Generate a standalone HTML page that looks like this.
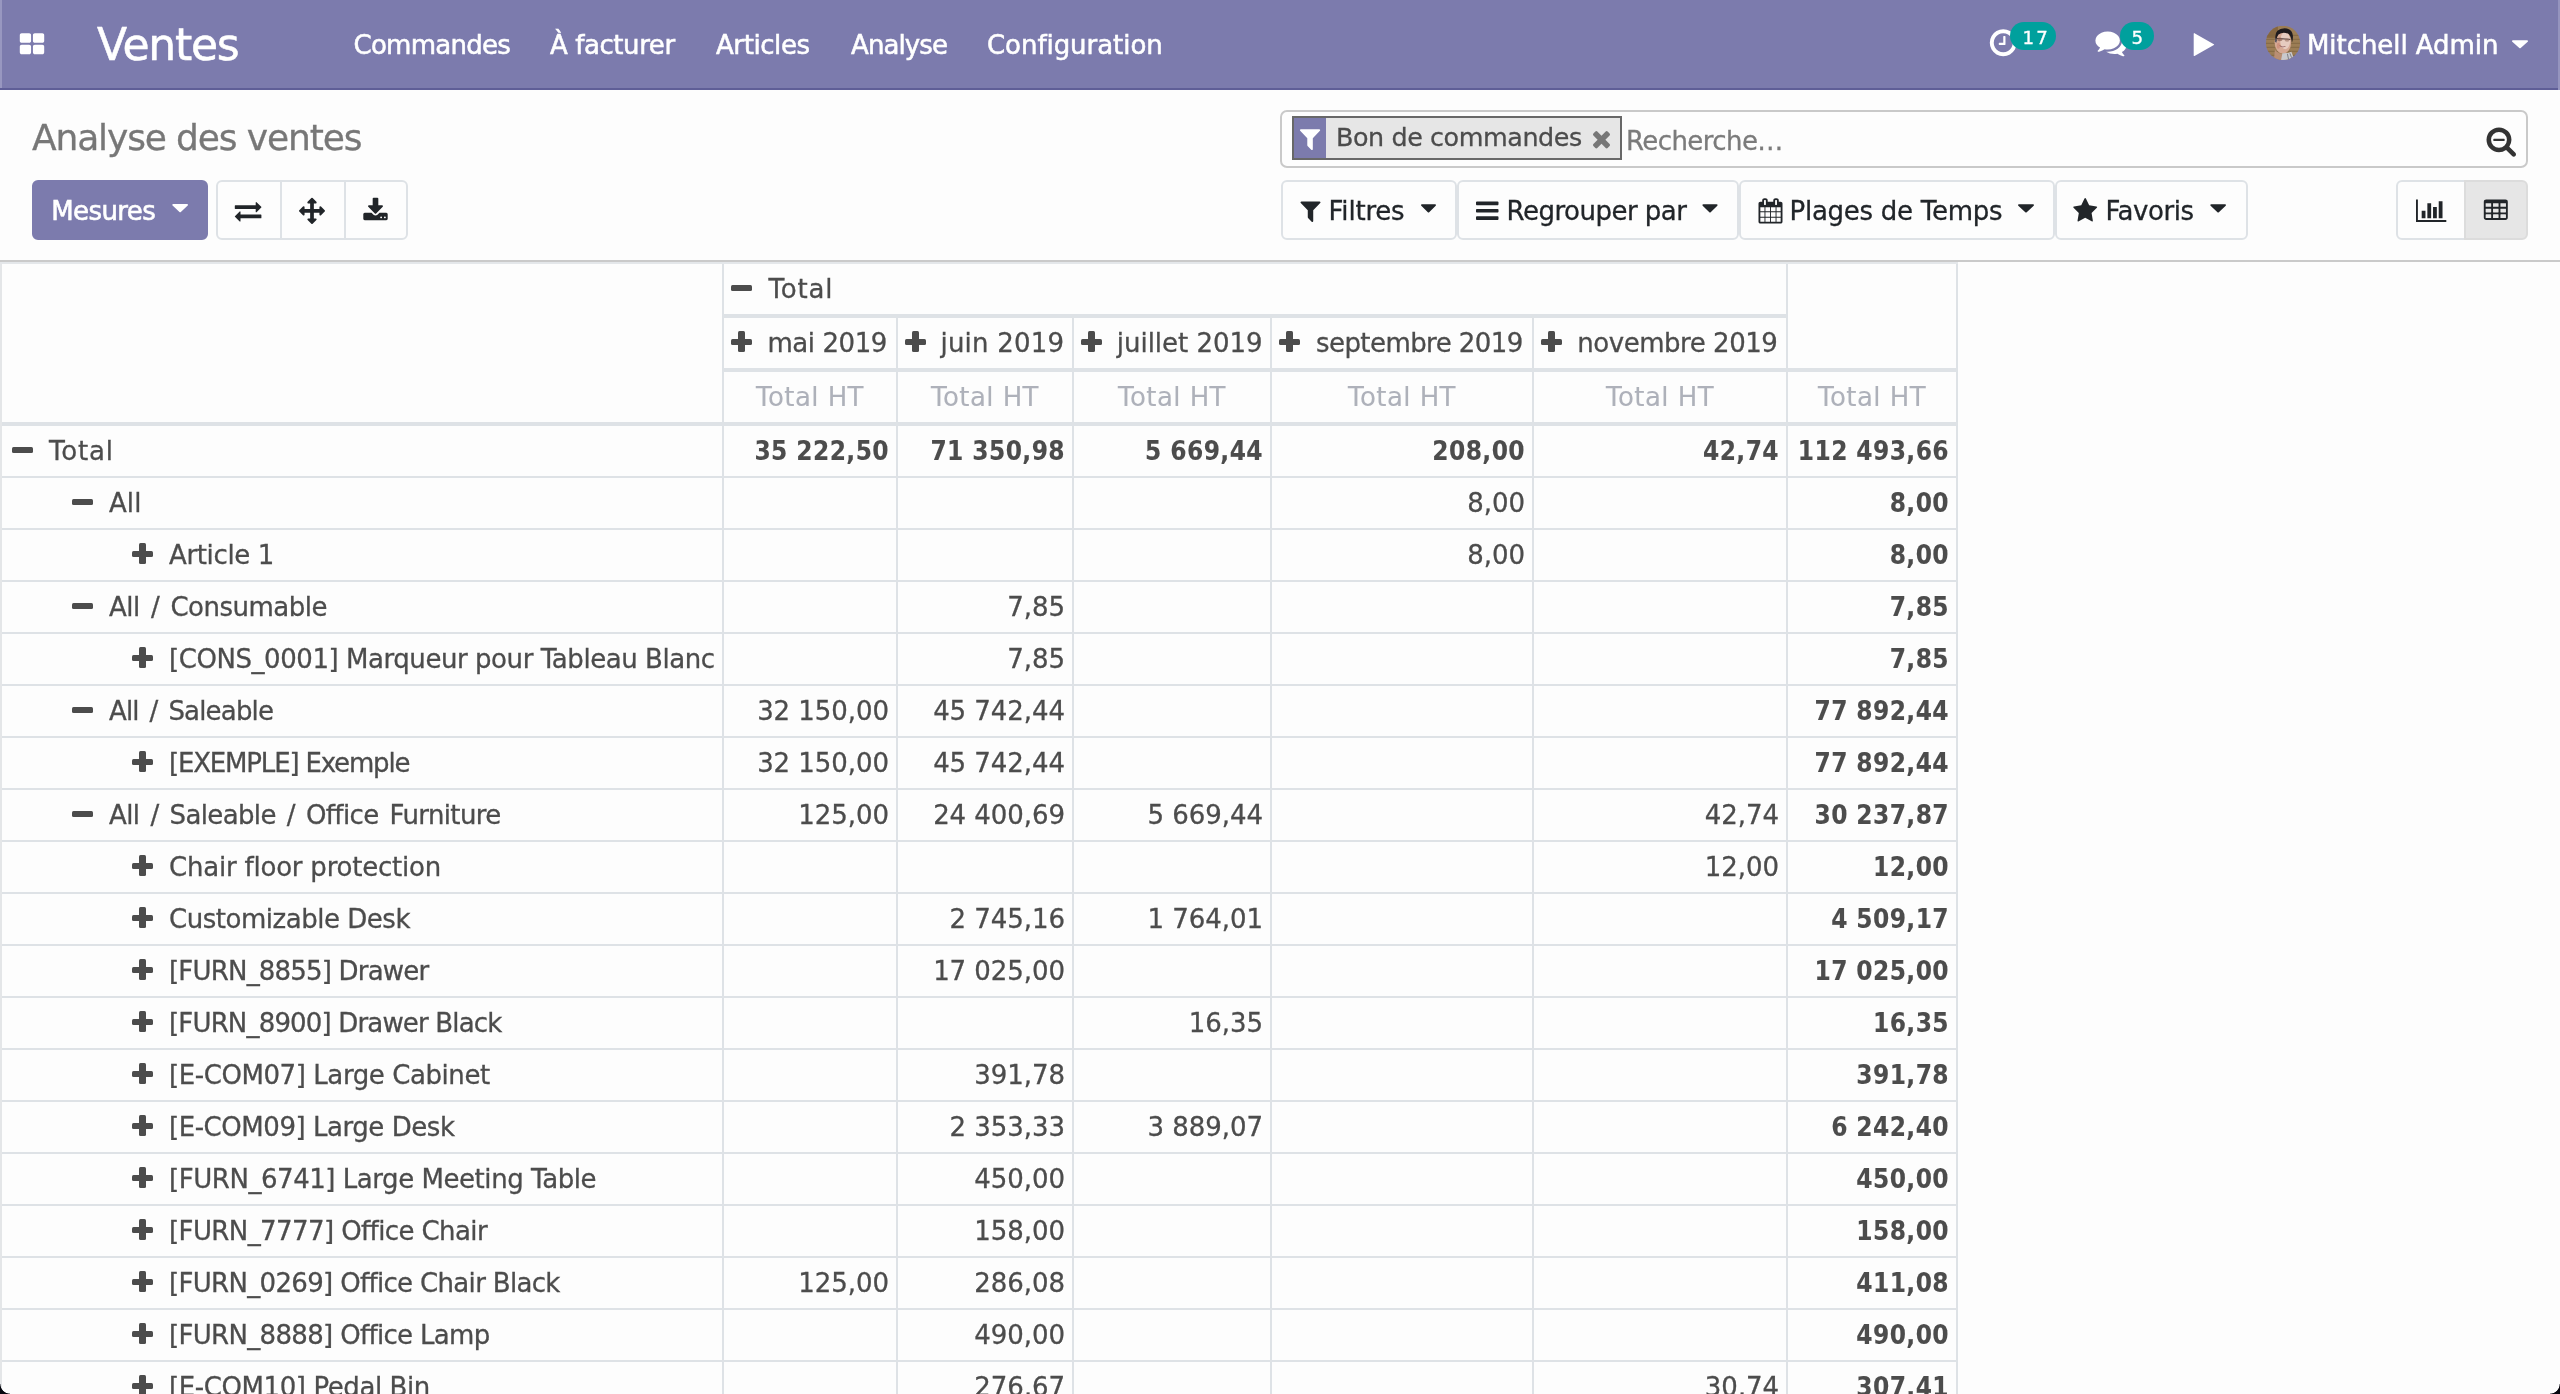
<!DOCTYPE html>
<html lang="fr">
<head>
<meta charset="utf-8">
<title>Odoo - Analyse des ventes</title>
<style>
html,body{margin:0;padding:0}
html{background:#fdfdfd}
body{will-change:transform;width:2560px;height:1394px;overflow:hidden;background:#fdfdfd;position:relative;
 font-family:"DejaVu Sans","Liberation Sans",sans-serif;font-size:26px;color:#4c4c4c;letter-spacing:-0.42px;-webkit-text-stroke:0.3px}
*{box-sizing:border-box}
.abs{position:absolute;white-space:nowrap}
svg.ov{position:absolute;left:0;top:0;overflow:visible;pointer-events:none}
/* navbar */
#nav{position:absolute;left:0;top:0;width:2560px;height:90px;background:#7c7bad;border-bottom:2px solid #5f5e97;color:#fff}
#nav .edge{position:absolute;left:0;top:0;width:2px;height:88px;background:#9897c0}
#nav .t{position:absolute;top:0.5px;-webkit-text-stroke:0.55px;height:88px;line-height:88px;white-space:nowrap}
#brand{font-size:44px;letter-spacing:-1.25px}
/* control panel */
#cp{position:absolute;left:0;top:90px;width:2560px;height:172px;background:#fdfdfd;border-bottom:2px solid #cacaca}
#title{left:32px;top:108px;height:60px;line-height:60px;font-size:36px;color:#777;letter-spacing:-1.13px}
.btn{position:absolute;top:180px;height:60px;line-height:56px;border:2px solid #dee2e6;border-radius:6px;background:#fdfdfd;color:#212529;white-space:nowrap}
.btn span{position:absolute;top:0;line-height:56px}
#mes{left:32px;width:176px;background:#7c7bad;border-color:#7c7bad;color:#fff;-webkit-text-stroke:0.6px}
#search{position:absolute;left:1280px;top:110px;width:1248px;height:58px;border:2px solid #c9c9c9;border-radius:7px;background:#fdfdfd}
#facet{position:absolute;left:1292px;top:116px;width:330px;height:44px;border:2px solid #686868;background:#e6e6e6}
#facet .ic0{position:absolute;left:0;top:0;width:32px;height:40px;background:#7c7bad}
/* table */
#pv{position:absolute;left:0;top:262px;border-collapse:separate;border-spacing:0;table-layout:fixed;width:1958px;
 border-left:2px solid #e4e6e8;border-top:2px solid #e4e7ea;background:#fdfdfd}
#pv th,#pv td{border-right:2px solid #dee2e6;border-bottom:2px solid #dee2e6;height:52px;line-height:48.8px;padding:1.2px 7px 0 0;
 font-weight:400;text-align:right;white-space:nowrap;overflow:hidden;vertical-align:top}
#pv thead th{border-bottom-width:4px;height:54px}
#pv th.ch,#pv th.rh{text-align:left}
#pv th.ch{padding-left:7px}
#pv th.ms{text-align:center;color:#aeb1ba;padding:1.2px 0 0 0;letter-spacing:0.43px;-webkit-text-stroke:0.15px}
#pv td{letter-spacing:-0.05px}
#pv th.l0{padding-left:10px}
#pv th.l1{padding-left:70px}
#pv th.l2{padding-left:130px}
#pv .b{font-weight:700;font-family:"DejaVu Sans Condensed","DejaVu Sans","Liberation Sans",sans-serif;letter-spacing:0.4px;-webkit-text-stroke:0.1px}
.ic{display:inline-block;width:21px;height:21px;position:relative;vertical-align:middle;top:-3px;margin-right:16px}
.ic::before{content:"";position:absolute;left:0;top:7.4px;width:21px;height:6.2px;border-radius:1.5px;background:#4c4c4c}
.ic.p::after{content:"";position:absolute;left:7.4px;top:0;width:6.2px;height:21px;border-radius:1.5px;background:#4c4c4c}
.corner{position:absolute;bottom:0;width:10px;height:10px}
</style>
</head>
<body>

<div id="nav">
 <div class="edge"></div><div class="edge" style="left:2558px;height:90px;background:#9594be"></div>
 <span class="t" id="brand" style="left:97px">Ventes</span>
 <span class="t" style="left:353.5px;letter-spacing:-0.72px">Commandes</span>
 <span class="t" style="left:550px">À facturer</span>
 <span class="t" style="left:716px">Articles</span>
 <span class="t" style="left:851px;letter-spacing:-0.9px">Analyse</span>
 <span class="t" style="left:987px;letter-spacing:-0.05px">Configuration</span>
 <span class="t" style="left:2307px;letter-spacing:-0.06px">Mitchell Admin</span>
</div>
<svg class="ov" width="2560" height="90" viewBox="0 0 2560 90">
<g transform="translate(19.800,54.200) scale(0.014663,-0.014844)"><path d="M768 512v-384q0 -52 -38 -90t-90 -38h-512q-52 0 -90 38t-38 90v384q0 52 38 90t90 38h512q52 0 90 -38t38 -90zM768 1280v-384q0 -52 -38 -90t-90 -38h-512q-52 0 -90 38t-38 90v384q0 52 38 90t90 38h512q52 0 90 -38t38 -90zM1664 512v-384q0 -52 -38 -90t-90 -38h-512q-52 0 -90 38t-38 90v384q0 52 38 90t90 38h512q52 0 90 -38t38 -90zM1664 1280v-384q0 -52 -38 -90t-90 -38h-512q-52 0 -90 38t-38 90v384q0 52 38 90t90 38h512q52 0 90 -38t38 -90z" fill="#fff"/></g>
<g transform="translate(1989.800,53.958) scale(0.017513,-0.017513)"><path d="M896 992v-448q0 -14 -9 -23t-23 -9h-320q-14 0 -23 9t-9 23v64q0 14 9 23t23 9h224v352q0 14 9 23t23 9h64q14 0 23 -9t9 -23zM1312 640q0 148 -73 273t-198 198t-273 73t-273 -73t-198 -198t-73 -273t73 -273t198 -198t273 -73t273 73t198 198t73 273zM1536 640q0 -209 -103 -385.5t-279.5 -279.5t-385.5 -103t-385.5 103t-279.5 279.5t-103 385.5t103 385.5t279.5 279.5t385.5 103t385.5 -103t279.5 -279.5t103 -385.5z" fill="#fff"/></g>
<rect x="2010" y="22" width="46" height="28" rx="14" fill="#00a09d"/>
<text x="2022.4" y="44" font-size="18.2" fill="#fff" stroke="#fff" stroke-width="0.35" letter-spacing="2.2">17</text>
<g transform="translate(2095.400,53.953) scale(0.017411,-0.017541)"><path d="M1408 768q0 -139 -94 -257t-256.5 -186.5t-353.5 -68.5q-86 0 -176 16q-124 -88 -278 -128q-36 -9 -86 -16h-3q-11 0 -20.5 8t-11.5 21q-1 3 -1 6.5t0.5 6.5t2 6l2.5 5t3.5 5.5t4 5t4.5 5t4 4.5q5 6 23 25t26 29.5t22.5 29t25 38.5t20.5 44q-124 72 -195 177t-71 224q0 139 94 257t256.5 186.5t353.5 68.5t353.5 -68.5t256.5 -186.5t94 -257zM1792 512q0 -120 -71 -224.5t-195 -176.5q10 -24 20.5 -44t25 -38.5t22.5 -29t26 -29.5t23 -25q1 -1 4 -4.5t4.5 -5t4 -5t3.5 -5.5l2.5 -5t2 -6t0.5 -6.5t-1 -6.5q-3 -14 -13 -22t-22 -7q-50 7 -86 16q-154 40 -278 128q-90 -16 -176 -16q-271 0 -472 132q58 -4 88 -4q161 0 309 45t264 129q125 92 192 212t67 254q0 77 -23 152q129 -71 204 -178t75 -230z" fill="#fff"/></g>
<rect x="2120" y="22" width="34" height="28" rx="14" fill="#00a09d"/>
<text x="2137.3" y="44" text-anchor="middle" font-size="18.2" fill="#fff" stroke="#fff" stroke-width="0.35" letter-spacing="0">5</text>
<g transform="translate(2193.700,54.080) scale(0.014570,-0.014813)"><path d="M1384 609l-1328 -738q-23 -13 -39.5 -3t-16.5 36v1472q0 26 16.5 36t39.5 -3l1328 -738q23 -13 23 -31t-23 -31z" fill="#fff"/></g>
<defs><clipPath id="av"><circle cx="2283" cy="42.9" r="17.1"/></clipPath></defs>
<g clip-path="url(#av)"><g transform="translate(2265.9,25.8)"><rect x="0" y="0" width="35" height="35" fill="#9c7d55"/><rect x="0" y="0" width="12" height="12" fill="#86663f"/><g stroke="#7f6442" stroke-width="1" opacity=".85"><path d="M0 9.5H35M0 13.5H35M0 17.5H35M0 21.5H35M0 25.5H35M0 29.5H35"/></g><path d="M8 34.5 L9 24 Q13 29 20 28 L24 34.5Z" fill="#b98e74"/><ellipse cx="17" cy="16.5" rx="8.3" ry="11.3" fill="#d6a995"/><ellipse cx="19.3" cy="15" rx="5" ry="8.5" fill="#e6cbc0"/><path d="M9.5 14 Q8.6 8 11.5 5 Q15 1.8 21 2.6 Q26.6 4 27 10 Q27.2 14 26 17 Q25.6 10.5 22.5 8 Q17 5.6 12.6 8.6 Q10.6 11 10.2 15.5Z" fill="#1f1b1e"/><path d="M9.5 12.2 L11 14.5 L10.5 17 L9 16Z" fill="#5a5560"/><path d="M11 12.6 L24.3 13.6" stroke="#4a3a38" stroke-width="1" fill="none"/><ellipse cx="14" cy="13.6" rx="2.6" ry="1.8" fill="#8a5f52" opacity=".7"/><ellipse cx="21.2" cy="14.2" rx="2.4" ry="1.7" fill="#9a7163" opacity=".6"/><path d="M12.6 19 Q16 23.4 20.4 20.2 Q16.5 21.2 12.6 19Z" fill="#7a3b3b"/><path d="M13.4 19.6 Q16.4 21.6 19.6 20.3 Q16.5 22.6 13.4 19.6Z" fill="#f3e4e0"/><ellipse cx="12.5" cy="20" rx="1.6" ry="3" fill="#c98672" opacity=".6"/><path d="M16.5 27.5 Q21 27.8 25.5 26 L29 35 L15 35Z" fill="#c9c9cd"/><path d="M21.5 28 L23 35 M24 27.5 L26.5 34" stroke="#77777c" stroke-width="0.9" fill="none"/></g></g>
<g transform="translate(2512.000,52.589) scale(0.015625,-0.013715)"><path d="M1024 832q0 -26 -19 -45l-448 -448q-19 -19 -45 -19t-45 19l-448 448q-19 19 -19 45t19 45t45 19h896q26 0 45 -19t19 -45z" fill="#fff"/></g>
</svg>

<div id="cp"></div>
<span class="abs" id="title">Analyse des ventes</span>
<div class="btn" id="mes"><span style="left:17.3px;top:1px;letter-spacing:-0.62px">Mesures</span></div>
<div class="btn" style="left:216px;width:66px;border-radius:6px 0 0 6px"></div>
<div class="btn" style="left:280px;width:66px;border-radius:0"></div>
<div class="btn" style="left:344px;width:64px;border-radius:0 6px 6px 0"></div>

<div id="search"></div>
<div id="facet"><div class="ic0"></div></div>
<span class="abs" style="left:1336px;top:106.6px;line-height:60px;font-size:25.4px;color:#4c4c4c">Bon de commandes</span>
<span class="abs" style="left:1626px;top:110.5px;line-height:60px;color:#7b7b7b;letter-spacing:-0.58px">Recherche…</span>

<div class="btn" style="left:1281px;width:176px"><span style="left:45.5px;top:1px;letter-spacing:-0.2px">Filtres</span></div>
<div class="btn" style="left:1457px;width:282px"><span style="left:47.5px;top:1px;letter-spacing:-0.5px">Regrouper par</span></div>
<div class="btn" style="left:1739px;width:316px"><span style="left:48.6px;top:1px;letter-spacing:-0.27px">Plages de Temps</span></div>
<div class="btn" style="left:2055px;width:193px"><span style="left:48.4px;top:1px">Favoris</span></div>
<div class="btn" style="left:2396px;width:70px;border-radius:6px 0 0 6px"></div>
<div class="btn" style="left:2464px;width:64px;border-radius:0 6px 6px 0;background:#e6e6e6;border-color:#dcdcdc"></div>
<svg class="ov" width="2560" height="262" viewBox="0 0 2560 262">
<g transform="translate(172.300,216.756) scale(0.015332,-0.014236)"><path d="M1024 832q0 -26 -19 -45l-448 -448q-19 -19 -45 -19t-45 19l-448 448q-19 19 -19 45t19 45t45 19h896q26 0 45 -19t19 -45z" fill="#fff"/></g>
<g transform="translate(234.800,220.200) scale(0.014844,-0.014583)"><path d="M1792 352v-192q0 -13 -9.5 -22.5t-22.5 -9.5h-1376v-192q0 -13 -9.5 -22.5t-22.5 -9.5q-12 0 -24 10l-319 320q-9 9 -9 22q0 14 9 23l320 320q9 9 23 9q13 0 22.5 -9.5t9.5 -22.5v-192h1376q13 0 22.5 -9.5t9.5 -22.5zM1792 896q0 -14 -9 -23l-320 -320q-9 -9 -23 -9q-13 0 -22.5 9.5t-9.5 22.5v192h-1376q-13 0 -22.5 9.5t-9.5 22.5v192q0 13 9.5 22.5t22.5 9.5h1376v192q0 14 9 23t23 9q12 0 24 -10l319 -319q9 -9 9 -23z" fill="#212529"/></g>
<g transform="translate(299.000,220.257) scale(0.014509,-0.014621)"><path d="M1792 640q0 -26 -19 -45l-256 -256q-19 -19 -45 -19t-45 19t-19 45v128h-384v-384h128q26 0 45 -19t19 -45t-19 -45l-256 -256q-19 -19 -45 -19t-45 19l-256 256q-19 19 -19 45t19 45t45 19h128v384h-384v-128q0 -26 -19 -45t-45 -19t-45 19l-256 256q-19 19 -19 45t19 45l256 256q19 19 45 19t45 -19t19 -45v-128h384v384h-128q-26 0 -45 19t-19 45t19 45l256 256q19 19 45 19t45 -19l256 -256q19 -19 19 -45t-19 -45t-45 -19h-128v-384h384v128q0 26 19 45t45 19t45 -19l256 -256q19 -19 19 -45z" fill="#212529"/></g>
<g transform="translate(363.300,220.200) scale(0.014663,-0.014583)"><path d="M1280 192q0 26 -19 45t-45 19t-45 -19t-19 -45t19 -45t45 -19t45 19t19 45zM1536 192q0 26 -19 45t-45 19t-45 -19t-19 -45t19 -45t45 -19t45 19t19 45zM1664 416v-320q0 -40 -28 -68t-68 -28h-1472q-40 0 -68 28t-28 68v320q0 40 28 68t68 28h465l135 -136q58 -56 136 -56t136 56l136 136h464q40 0 68 -28t28 -68zM1339 985q17 -41 -14 -70l-448 -448q-18 -19 -45 -19t-45 19l-448 448q-31 29 -14 70q17 39 59 39h256v448q0 26 19 45t45 19h256q26 0 45 -19t19 -45v-448h256q42 0 59 -39z" fill="#212529"/></g>
<g transform="translate(1299.915,148.200) scale(0.014397,-0.014844)"><path d="M1403 1241q17 -41 -14 -70l-493 -493v-742q0 -42 -39 -59q-13 -5 -25 -5q-27 0 -45 19l-256 256q-19 19 -19 45v486l-493 493q-31 29 -14 70q17 39 59 39h1280q42 0 59 -39z" fill="#fff"/></g>
<g transform="translate(1591.426,148.235) scale(0.014310,-0.014731)"><path d="M1298 214q0 -40 -28 -68l-136 -136q-28 -28 -68 -28t-68 28l-294 294l-294 -294q-28 -28 -68 -28t-68 28l-136 136q-28 28 -28 68t28 68l294 294l-294 294q-28 28 -28 68t28 68l136 136q28 28 68 28t68 -28l294 -294l294 294q28 28 68 28t68 -28l136 -136q28 -28 28 -68t-28 -68l-294 -294l294 -294q28 -28 28 -68z" fill="#777"/></g>
<g transform="translate(2486.500,152.208) scale(0.017728,-0.017548)"><path d="M1024 736v-64q0 -13 -9.5 -22.5t-22.5 -9.5h-576q-13 0 -22.5 9.5t-9.5 22.5v64q0 13 9.5 22.5t22.5 9.5h576q13 0 22.5 -9.5t9.5 -22.5zM1152 704q0 185 -131.5 316.5t-316.5 131.5t-316.5 -131.5t-131.5 -316.5t131.5 -316.5t316.5 -131.5t316.5 131.5t131.5 316.5zM1664 -128q0 -53 -37.5 -90.5t-90.5 -37.5q-54 0 -90 38l-343 342q-179 -124 -399 -124q-143 0 -273.5 55.5t-225 150t-150 225t-55.5 273.5t55.5 273.5t150 225t225 150t273.5 55.5t273.5 -55.5t225 -150t150 -225t55.5 -273.5q0 -220 -124 -399l343 -343q37 -37 37 -90z" fill="#333"/></g>
<g transform="translate(1300.514,220.136) scale(0.014184,-0.014560)"><path d="M1403 1241q17 -41 -14 -70l-493 -493v-742q0 -42 -39 -59q-13 -5 -25 -5q-27 0 -45 19l-256 256q-19 19 -19 45v486l-493 493q-31 29 -14 70q17 39 59 39h1280q42 0 59 -39z" fill="#212529"/></g>
<g transform="translate(1421.000,216.956) scale(0.014648,-0.014236)"><path d="M1024 832q0 -26 -19 -45l-448 -448q-19 -19 -45 -19t-45 19l-448 448q-19 19 -19 45t19 45t45 19h896q26 0 45 -19t19 -45z" fill="#212529"/></g>
<g transform="translate(1476.000,220.000) scale(0.014648,-0.014453)"><path d="M1536 192v-128q0 -26 -19 -45t-45 -19h-1408q-26 0 -45 19t-19 45v128q0 26 19 45t45 19h1408q26 0 45 -19t19 -45zM1536 704v-128q0 -26 -19 -45t-45 -19h-1408q-26 0 -45 19t-19 45v128q0 26 19 45t45 19h1408q26 0 45 -19t19 -45zM1536 1216v-128q0 -26 -19 -45t-45 -19h-1408q-26 0 -45 19t-19 45v128q0 26 19 45t45 19h1408q26 0 45 -19t19 -45z" fill="#212529"/></g>
<g transform="translate(1702.400,216.956) scale(0.014844,-0.014236)"><path d="M1024 832q0 -26 -19 -45l-448 -448q-19 -19 -45 -19t-45 19l-448 448q-19 19 -19 45t19 45t45 19h896q26 0 45 -19t19 -45z" fill="#212529"/></g>
<g transform="translate(1758.500,219.971) scale(0.014423,-0.014174)"><path d="M128 -128h288v288h-288v-288zM480 -128h320v288h-320v-288zM128 224h288v320h-288v-320zM480 224h320v320h-320v-320zM128 608h288v288h-288v-288zM864 -128h320v288h-320v-288zM480 608h320v288h-320v-288zM1248 -128h288v288h-288v-288zM864 224h320v320h-320v-320zM512 1088v288q0 13 -9.5 22.5t-22.5 9.5h-64q-13 0 -22.5 -9.5t-9.5 -22.5v-288q0 -13 9.5 -22.5t22.5 -9.5h64q13 0 22.5 9.5t9.5 22.5zM1248 224h288v320h-288v-320zM864 608h320v288h-320v-288zM1248 608h288v288h-288v-288zM1280 1088v288q0 13 -9.5 22.5t-22.5 9.5h-64q-13 0 -22.5 -9.5t-9.5 -22.5v-288q0 -13 9.5 -22.5t22.5 -9.5h64q13 0 22.5 9.5t9.5 22.5zM1664 1152v-1280q0 -52 -38 -90t-90 -38h-1408q-52 0 -90 38t-38 90v1280q0 52 38 90t90 38h128v96q0 66 47 113t113 47h64q66 0 113 -47t47 -113v-96h384v96q0 66 47 113t113 47h64q66 0 113 -47t47 -113v-96h128q52 0 90 -38t38 -90z" fill="#212529"/></g>
<g transform="translate(2018.000,216.956) scale(0.015625,-0.014236)"><path d="M1024 832q0 -26 -19 -45l-448 -448q-19 -19 -45 -19t-45 19l-448 448q-19 19 -19 45t19 45t45 19h896q26 0 45 -19t19 -45z" fill="#212529"/></g>
<g transform="translate(2073.200,220.271) scale(0.014423,-0.014808)"><path d="M1664 889q0 -22 -26 -48l-363 -354l86 -500q1 -7 1 -20q0 -21 -10.5 -35.5t-30.5 -14.5q-19 0 -40 12l-449 236l-449 -236q-22 -12 -40 -12q-21 0 -31.5 14.5t-10.5 35.5q0 6 2 20l86 500l-364 354q-25 27 -25 48q0 37 56 46l502 73l225 455q19 41 49 41t49 -41l225 -455l502 -73q56 -9 56 -46z" fill="#212529"/></g>
<g transform="translate(2210.300,216.956) scale(0.015332,-0.014236)"><path d="M1024 832q0 -26 -19 -45l-448 -448q-19 -19 -45 -19t-45 19l-448 448q-19 19 -19 45t19 45t45 19h896q26 0 45 -19t19 -45z" fill="#212529"/></g>
<g transform="translate(2416.000,220.025) scale(0.014795,-0.014648)"><path d="M640 640v-512h-256v512h256zM1024 1152v-1024h-256v1024h256zM2048 0v-128h-2048v1536h128v-1408h1920zM1408 896v-768h-256v768h256zM1792 1280v-1152h-256v1152h256z" fill="#212529"/></g>
<g transform="translate(2483.800,219.900) scale(0.014423,-0.014560)"><path d="M512 160v192q0 14 -9 23t-23 9h-320q-14 0 -23 -9t-9 -23v-192q0 -14 9 -23t23 -9h320q14 0 23 9t9 23zM512 544v192q0 14 -9 23t-23 9h-320q-14 0 -23 -9t-9 -23v-192q0 -14 9 -23t23 -9h320q14 0 23 9t9 23zM1024 160v192q0 14 -9 23t-23 9h-320q-14 0 -23 -9t-9 -23v-192q0 -14 9 -23t23 -9h320q14 0 23 9t9 23zM512 928v192q0 14 -9 23t-23 9h-320q-14 0 -23 -9t-9 -23v-192q0 -14 9 -23t23 -9h320q14 0 23 9t9 23zM1024 544v192q0 14 -9 23t-23 9h-320q-14 0 -23 -9t-9 -23v-192q0 -14 9 -23t23 -9h320q14 0 23 9t9 23zM1536 160v192q0 14 -9 23t-23 9h-320q-14 0 -23 -9t-9 -23v-192q0 -14 9 -23t23 -9h320q14 0 23 9t9 23zM1024 928v192q0 14 -9 23t-23 9h-320q-14 0 -23 -9t-9 -23v-192q0 -14 9 -23t23 -9h320q14 0 23 9t9 23zM1536 544v192q0 14 -9 23t-23 9h-320q-14 0 -23 -9t-9 -23v-192q0 -14 9 -23t23 -9h320q14 0 23 9t9 23zM1536 928v192q0 14 -9 23t-23 9h-320q-14 0 -23 -9t-9 -23v-192q0 -14 9 -23t23 -9h320q14 0 23 9t9 23zM1664 1248v-1088q0 -66 -47 -113t-113 -47h-1344q-66 0 -113 47t-47 113v1088q0 66 47 113t113 47h1344q66 0 113 -47t47 -113z" fill="#212529"/></g>
</svg>

<table id="pv">
<colgroup><col style="width:722px"><col style="width:174px"><col style="width:176px"><col style="width:198px"><col style="width:262px"><col style="width:254px"><col style="width:170px"></colgroup>
<thead>
<tr><th rowspan="3"></th><th class="ch" colspan="5"><i class="ic m"></i><span style="letter-spacing:0.83px;margin-left:0.5px">Total</span></th><th rowspan="2"></th></tr>
<tr><th class="ch"><i class="ic p"></i><span style="margin-left:-0.6px">mai 2019</span></th><th class="ch"><i class="ic p"></i><span style="letter-spacing:0.2px;margin-left:-1.5px">juin 2019</span></th><th class="ch"><i class="ic p"></i><span style="letter-spacing:-0.01px;margin-left:-1.25px">juillet 2019</span></th><th class="ch"><i class="ic p"></i><span style="letter-spacing:-0.57px">septembre 2019</span></th><th class="ch"><i class="ic p"></i><span style="letter-spacing:-0.47px;margin-left:-0.7px">novembre 2019</span></th></tr>
<tr><th class="ms">Total HT</th><th class="ms">Total HT</th><th class="ms">Total HT</th><th class="ms">Total HT</th><th class="ms">Total HT</th><th class="ms">Total HT</th></tr>
</thead>
<tbody>
<tr><th class="rh l0"><i class="ic m"></i><span style="letter-spacing:0.83px">Total</span></th><td class=b>35&nbsp;222,50</td><td class=b>71&nbsp;350,98</td><td class=b>5&nbsp;669,44</td><td class=b>208,00</td><td class=b>42,74</td><td class=b>112&nbsp;493,66</td></tr>
<tr><th class="rh l1"><i class="ic m"></i><span style="letter-spacing:0.08px">All</span></th><td></td><td></td><td></td><td>8,00</td><td></td><td class=b>8,00</td></tr>
<tr><th class="rh l2"><i class="ic p"></i><span style="letter-spacing:-0.36px">Article 1</span></th><td></td><td></td><td></td><td>8,00</td><td></td><td class=b>8,00</td></tr>
<tr><th class="rh l1"><i class="ic m"></i><span style="word-spacing:3.4px;letter-spacing:-0.49px">All / Consumable</span></th><td></td><td>7,85</td><td></td><td></td><td></td><td class=b>7,85</td></tr>
<tr><th class="rh l2"><i class="ic p"></i><span style="letter-spacing:-0.44px">[CONS_0001] Marqueur pour Tableau Blanc</span></th><td></td><td>7,85</td><td></td><td></td><td></td><td class=b>7,85</td></tr>
<tr><th class="rh l1"><i class="ic m"></i><span style="word-spacing:3.4px;letter-spacing:-0.82px">All / Saleable</span></th><td>32&nbsp;150,00</td><td>45&nbsp;742,44</td><td></td><td></td><td></td><td class=b>77&nbsp;892,44</td></tr>
<tr><th class="rh l2"><i class="ic p"></i><span style="letter-spacing:-1.18px">[EXEMPLE] Exemple</span></th><td>32&nbsp;150,00</td><td>45&nbsp;742,44</td><td></td><td></td><td></td><td class=b>77&nbsp;892,44</td></tr>
<tr><th class="rh l1"><i class="ic m"></i><span style="word-spacing:3.4px;letter-spacing:-0.63px">All / Saleable / Office Furniture</span></th><td>125,00</td><td>24&nbsp;400,69</td><td>5&nbsp;669,44</td><td></td><td>42,74</td><td class=b>30&nbsp;237,87</td></tr>
<tr><th class="rh l2"><i class="ic p"></i><span style="letter-spacing:-0.21px">Chair floor protection</span></th><td></td><td></td><td></td><td></td><td>12,00</td><td class=b>12,00</td></tr>
<tr><th class="rh l2"><i class="ic p"></i><span style="letter-spacing:-0.47px">Customizable Desk</span></th><td></td><td>2&nbsp;745,16</td><td>1&nbsp;764,01</td><td></td><td></td><td class=b>4&nbsp;509,17</td></tr>
<tr><th class="rh l2"><i class="ic p"></i><span style="letter-spacing:-0.80px">[FURN_8855] Drawer</span></th><td></td><td>17&nbsp;025,00</td><td></td><td></td><td></td><td class=b>17&nbsp;025,00</td></tr>
<tr><th class="rh l2"><i class="ic p"></i><span style="letter-spacing:-0.83px">[FURN_8900] Drawer Black</span></th><td></td><td></td><td>16,35</td><td></td><td></td><td class=b>16,35</td></tr>
<tr><th class="rh l2"><i class="ic p"></i><span style="letter-spacing:-0.42px">[E-COM07] Large Cabinet</span></th><td></td><td>391,78</td><td></td><td></td><td></td><td class=b>391,78</td></tr>
<tr><th class="rh l2"><i class="ic p"></i><span style="letter-spacing:-0.45px">[E-COM09] Large Desk</span></th><td></td><td>2&nbsp;353,33</td><td>3&nbsp;889,07</td><td></td><td></td><td class=b>6&nbsp;242,40</td></tr>
<tr><th class="rh l2"><i class="ic p"></i><span style="letter-spacing:-0.45px">[FURN_6741] Large Meeting Table</span></th><td></td><td>450,00</td><td></td><td></td><td></td><td class=b>450,00</td></tr>
<tr><th class="rh l2"><i class="ic p"></i><span style="letter-spacing:-0.59px">[FURN_7777] Office Chair</span></th><td></td><td>158,00</td><td></td><td></td><td></td><td class=b>158,00</td></tr>
<tr><th class="rh l2"><i class="ic p"></i><span style="letter-spacing:-0.67px">[FURN_0269] Office Chair Black</span></th><td>125,00</td><td>286,08</td><td></td><td></td><td></td><td class=b>411,08</td></tr>
<tr><th class="rh l2"><i class="ic p"></i><span style="letter-spacing:-0.67px">[FURN_8888] Office Lamp</span></th><td></td><td>490,00</td><td></td><td></td><td></td><td class=b>490,00</td></tr>
<tr><th class="rh l2"><i class="ic p"></i><span style="letter-spacing:-0.41px">[E-COM10] Pedal Bin</span></th><td></td><td>276,67</td><td></td><td></td><td>30,74</td><td class=b>307,41</td></tr>
</tbody>
</table>

<div class="corner" style="left:0;background:radial-gradient(circle at 100% 0,rgba(0,0,0,0) 9.2px,#07070f 10px)"></div>
<div class="corner" style="right:0;background:radial-gradient(circle at 0 0,rgba(0,0,0,0) 9.2px,#07070f 10px)"></div>
</body>
</html>
